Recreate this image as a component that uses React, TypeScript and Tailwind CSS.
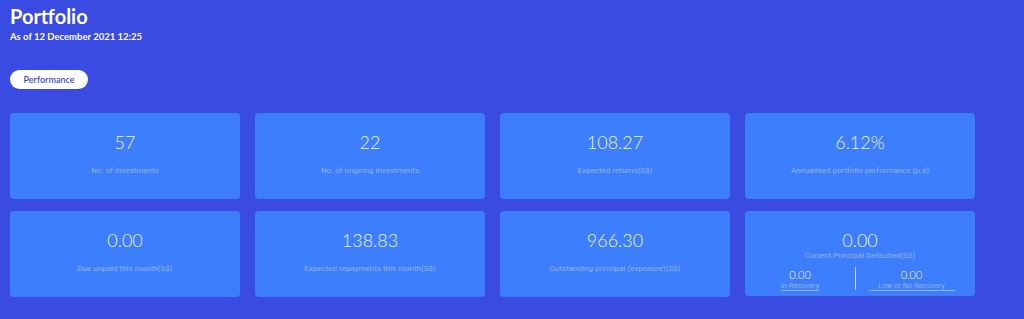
import React from 'react';

const stats = [
  { value: '57', label: 'No. of investments' },
  { value: '22', label: 'No. of ongoing investments' },
  { value: '108.27', label: 'Expected returns(S$)' },
  { value: '6.12%', label: 'Annualised portfolio performance (p.a)' },
  { value: '0.00', label: 'Due unpaid this month(S$)' },
  { value: '138.83', label: 'Expected repayments this month(S$)' },
  { value: '966.30', label: 'Outstanding principal (exposure)(S$)' },
];

const numFont = "font-['Lato','Noto_Sans',sans-serif]";
const labelFont = "font-['Roboto','Liberation_Sans',sans-serif]";

const StatCard: React.FC<{ value: string; label: string }> = ({ value, label }) => (
  <div className="h-[86px] rounded-[4px] bg-[#3d7efc] flex flex-col items-center pt-[19px]">
    <div className={`${numFont} text-[18px] leading-[20px] font-light text-[#eef3ff]`}>{value}</div>
    <div className={`${labelFont} mt-[14px] text-[8px] leading-[10px] text-[#93b3f8]`}>{label}</div>
  </div>
);

export default function App() {
  return (
    <div className="w-[1024px] h-[319px] bg-[#3a4be2] px-[10px] pt-[3px] overflow-hidden">
      <h1 className={`${numFont} text-[20px] leading-[26px] font-bold text-white`}>Portfolio</h1>
      <p className={`${numFont} text-[9.5px] leading-[12px] font-bold text-white mt-[2px]`}>
        As of 12 December 2021 12:25
      </p>

      <button className={`${numFont} mt-[27px] h-[19px] w-[78px] rounded-full bg-white text-[#3a4be2] text-[9px] font-semibold`}>
        Performance
      </button>

      <div className="mt-[24px] w-[965px] grid grid-cols-4 gap-x-[15px] gap-y-[12px]">
        {stats.map((s) => (
          <StatCard key={s.label} value={s.value} label={s.label} />
        ))}

        <div className="h-[85px] rounded-[4px] bg-[#3d7efc] flex flex-col items-center pt-[19px]">
          <div className={`${numFont} text-[18px] leading-[20px] font-light text-[#eef3ff]`}>0.00</div>
          <div className={`${labelFont} mt-[1px] text-[8px] leading-[10px] text-[#93b3f8]`}>
            Current Principal Defaulted(S$)
          </div>
          <div className="mt-[6px] w-full flex">
            <div className="w-[110px] flex flex-col items-center pt-[2px]">
              <div className={`${numFont} text-[11px] leading-[12px] font-light text-[#eef3ff]`}>0.00</div>
              <div className={`${labelFont} text-[7.5px] leading-[9px] text-[#93b3f8] border-b border-[#93b3f8]`}>
                In Recovery
              </div>
            </div>
            <div className="w-px h-[23px] bg-[#cfe0ff]" />
            <div className="flex-1 flex flex-col items-center pt-[2px] pr-[8px]">
              <div className={`${numFont} text-[11px] leading-[12px] font-light text-[#eef3ff]`}>0.00</div>
              <div className={`${labelFont} w-[86px] text-center text-[7.5px] leading-[9px] text-[#93b3f8] border-b border-[#93b3f8]`}>
                Low or No Recovery
              </div>
            </div>
          </div>
        </div>
      </div>
    </div>
  );
}
